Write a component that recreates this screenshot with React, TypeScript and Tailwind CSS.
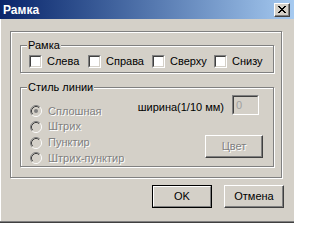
import type { ReactNode } from "react";

const font = "font-['Liberation_Sans',Arial,sans-serif]";
const disabled = "text-[#808080] [text-shadow:1px_1px_0_#fff]";

function CloseGlyph() {
  // classic 8x7 pixel cross
  const rows = ["11000011", "01100110", "00111100", "00011000", "00111100", "01100110", "11000011"];
  return (
    <svg width="8" height="7" viewBox="0 0 8 7" shapeRendering="crispEdges">
      {rows.map((r, y) =>
        r.split("").map((c, x) => (c === "1" ? <rect key={`${x}-${y}`} x={x} y={y} width="1" height="1" fill="#000" /> : null)),
      )}
    </svg>
  );
}

function Checkbox() {
  return (
    <div className="w-[13px] h-[13px] shrink-0 border border-t-[#808080] border-l-[#808080] border-r-white border-b-white">
      <div className="w-full h-full bg-white border border-t-[#404040] border-l-[#404040] border-r-[#d4d0c8] border-b-[#d4d0c8]" />
    </div>
  );
}

function Radio({ checked }: { checked?: boolean }) {
  return (
    <svg width="12" height="12" viewBox="0 0 12 12" className="shrink-0">
      <circle cx="6" cy="6" r="4" fill="#d4d0c8" />
      <path d="M2.11 9.89 A5.5 5.5 0 0 1 9.89 2.11" stroke="#808080" fill="none" />
      <path d="M9.89 2.11 A5.5 5.5 0 0 1 2.11 9.89" stroke="#fff" fill="none" />
      <path d="M2.82 9.18 A4.5 4.5 0 0 1 9.18 2.82" stroke="#404040" fill="none" />
      <path d="M9.18 2.82 A4.5 4.5 0 0 1 2.82 9.18" stroke="#d4d0c8" fill="none" />
      {checked && <circle cx="6" cy="6" r="2" fill="#808080" />}
    </svg>
  );
}

function GroupBox({ label, className, children }: { label: string; className: string; children: ReactNode }) {
  return (
    <div className={`relative border border-[#808080] shadow-[1px_1px_0_#fff,inset_1px_1px_0_#fff] ${className}`}>
      <span className="absolute left-[6px] -top-[7px] px-[1px] bg-[#d4d0c8] leading-[13px]">{label}</span>
      {children}
    </div>
  );
}

function Button({ children, isDefault, off }: { children: ReactNode; isDefault?: boolean; off?: boolean }) {
  const face = isDefault
    ? "border-t-white border-l-white border-r-[#808080] border-b-[#808080]"
    : "border-t-white border-l-white border-r-[#404040] border-b-[#404040] shadow-[inset_-1px_-1px_0_#808080]";
  return (
    <div className={`w-full h-full ${isDefault ? "border border-black" : ""}`}>
      <div className={`w-full h-full border flex items-center justify-center ${face} ${off ? disabled : ""}`}>
        {children}
      </div>
    </div>
  );
}

export default function App() {
  const checks = [
    { label: "Слева", w: "w-[59px]" },
    { label: "Справа", w: "w-[64px]" },
    { label: "Сверху", w: "w-[62px]" },
    { label: "Снизу", w: "" },
  ];
  const radios = [
    { label: "Сплошная", h: "h-[17px]", checked: true },
    { label: "Штрих", h: "h-[16px]" },
    { label: "Пунктир", h: "h-[17px]" },
    { label: "Штрих-пунктир", h: "h-[16px]" },
  ];

  return (
    <div
      className={`w-[294px] h-[223px] bg-[#d4d0c8] flex flex-col text-[11px] leading-[13px] text-black ${font} shadow-[inset_0_-1px_0_#404040,inset_0_-2px_0_#808080,inset_1px_0_0_#fff]`}
    >
      {/* Title bar */}
      <div className="h-[19px] shrink-0 flex items-center justify-between pl-[3px] pr-[4px] bg-gradient-to-r from-[#0a246a] to-[#a6caf0]">
        <span className="text-white font-bold text-[12px] leading-[14px]">Рамка</span>
        <div className="w-[16px] h-[14px] flex items-center justify-center border border-t-white border-l-white border-r-[#404040] border-b-[#404040] bg-[#d4d0c8] shadow-[inset_-1px_-1px_0_#808080]">
          <CloseGlyph />
        </div>
      </div>

      {/* Outer frame */}
      <div className="ml-[10px] mt-[12px] w-[272px] h-[147px] shrink-0 border border-[#808080] shadow-[1px_1px_0_#fff,inset_1px_1px_0_#fff] flex flex-col">
        <GroupBox label="Рамка" className="ml-[9px] mt-[13px] w-[254px] h-[28px] shrink-0">
          <div className="flex pl-[8px] mt-[9px]">
            {checks.map((c) => (
              <div key={c.label} className={`flex items-center gap-[5px] h-[13px] ${c.w}`}>
                <Checkbox />
                <span>{c.label}</span>
              </div>
            ))}
          </div>
        </GroupBox>

        <GroupBox label="Стиль линии" className="ml-[9px] mt-[14px] w-[254px] h-[80px] shrink-0 flex">
          <div className="flex flex-col pl-[9px] mt-[15px]">
            {radios.map((r) => (
              <div key={r.label} className={`flex items-center gap-[6px] ${r.h}`}>
                <Radio checked={r.checked} />
                <span className={disabled}>{r.label}</span>
              </div>
            ))}
          </div>
          <div className="flex-1 flex flex-col items-end">
            <div className="flex items-center gap-[8px] mt-[7px] pr-[14px]">
              <span className="translate-y-[2px]">ширина(1/10 мм)</span>
              <div className="w-[27px] h-[20px] border border-t-[#808080] border-l-[#808080] border-r-white border-b-white">
                <div className="w-full h-full border border-t-[#404040] border-l-[#404040] border-r-[#d4d0c8] border-b-[#d4d0c8] pl-[2px] flex items-center text-[#a0a0a0]">
                  0
                </div>
              </div>
            </div>
            <div className="w-[58px] h-[23px] mt-[20px] mr-[10px]">
              <Button off>Цвет</Button>
            </div>
          </div>
        </GroupBox>
      </div>

      {/* Buttons */}
      <div className="flex gap-[12px] ml-[152px] mt-[7px]">
        <div className="w-[60px] h-[23px]">
          <Button isDefault>OK</Button>
        </div>
        <div className="w-[60px] h-[23px]">
          <Button>Отмена</Button>
        </div>
      </div>
    </div>
  );
}
